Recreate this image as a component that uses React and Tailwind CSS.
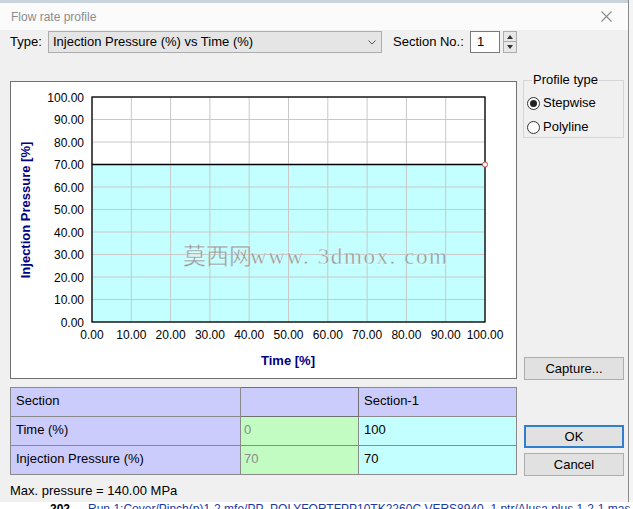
import React from 'react';

const font = { fontFamily: '"Liberation Sans", Arial, sans-serif' };

// plot geometry in page coordinates
const PX0 = 92;
const PX1 = 485;
const PY0 = 97;
const PY1 = 322;
const ticks = [0, 1, 2, 3, 4, 5, 6, 7, 8, 9, 10];

function Chart() {
  const xAt = (i) => PX0 + (i * (PX1 - PX0)) / 10;
  const yAt = (i) => PY1 - (i * (PY1 - PY0)) / 10;
  const yFill = yAt(7);
  return (
    <svg width="505" height="296" className="block">
      <g transform="translate(-11,-82)">
        <rect x={PX0} y={PY0} width={PX1 - PX0} height={PY1 - PY0} fill="#ffffff" />
        <rect x={PX0} y={yFill} width={PX1 - PX0} height={PY1 - yFill} fill="#c4ffff" />
        {ticks.map((i) => (
          <g key={i}>
            <line x1={xAt(i)} x2={xAt(i)} y1={PY0} y2={PY1} stroke="#c8c8c8" strokeWidth="1" />
            <line x1={PX0} x2={PX1} y1={yAt(i)} y2={yAt(i)} stroke="#c8c8c8" strokeWidth="1" />
            <text x="84" y={yAt(i) + 4.5} textAnchor="end" fontSize="12" fill="#000" style={font}>
              {(i * 10).toFixed(2)}
            </text>
            <text x={xAt(i)} y="338.5" textAnchor="middle" fontSize="12" fill="#000" style={font}>
              {(i * 10).toFixed(2)}
            </text>
          </g>
        ))}
        <line x1={PX0} x2={PX1} y1={yFill} y2={yFill} stroke="#000" strokeWidth="1.3" />
        <rect x={PX0} y={PY0} width={PX1 - PX0} height={PY1 - PY0} fill="none" stroke="#000" strokeWidth="1.3" />
        <circle cx={PX1} cy={yFill} r="2.6" fill="#ffffff" stroke="#d04040" strokeWidth="1" />
        <text
          x="0"
          y="0"
          transform="translate(30,210) rotate(-90)"
          textAnchor="middle"
          fontSize="13"
          fontWeight="bold"
          fill="#000080"
          style={font}
        >
          Injection Pressure [%]
        </text>
        <text x="288" y="365" textAnchor="middle" fontSize="13" fontWeight="bold" fill="#000080" style={font}>
          Time [%]
        </text>
        <text
          x="183"
          y="264"
          fontSize="23"
          fill="#8c9c9c"
          stroke="#ffffff"
          strokeWidth="0.3"
          style={{ fontFamily: '"Noto Sans CJK SC", "Liberation Serif", serif' }}
        >
          莫西网
        </text>
        <text
          x="250"
          y="264"
          fontSize="23"
          fill="#8c9c9c"
          stroke="#ffffff"
          strokeWidth="0.3"
          textLength="197"
          style={{ fontFamily: '"Liberation Serif", serif' }}
        >
          www. 3dmox. com
        </text>
      </g>
    </svg>
  );
}

function Radio({ checked, label }) {
  return (
    <label className="flex h-[24px] items-center gap-[3px]">
      <span className="flex h-[13px] w-[13px] items-center justify-center rounded-full border border-[#333] bg-white">
        {checked && <span className="h-[7px] w-[7px] rounded-full bg-[#222]" />}
      </span>
      <span>{label}</span>
    </label>
  );
}

function Button({ children, primary }) {
  return (
    <button
      className={
        'flex h-[23px] w-[100px] items-center justify-center bg-[#e1e1e1] text-[13px] text-black ' +
        (primary ? 'border-2 border-[#2f7fd0]' : 'border border-[#adadad]')
      }
    >
      {children}
    </button>
  );
}

export default function App() {
  const lav = 'bg-[#ccccfc]';
  return (
    <div className="relative h-[509px] w-[633px] overflow-hidden bg-[#f4f4f4] text-[13px] text-black" style={font}>
      <div className="flex h-[502px] w-[629px] flex-col border-r border-[#8a8a8a] bg-[#f0f0f0]">
        {/* title bar */}
        <div className="flex h-[30px] items-center justify-between border-t-[3px] border-[#c9d3dc] bg-[#fbfbfb] pl-[11px] pr-[16px]">
          <span className="text-[12px] text-[#8c8c8c]">Flow rate profile</span>
          <svg width="11" height="11" viewBox="0 0 11 11">
            <path d="M0.5 0.5 L10.5 10.5 M10.5 0.5 L0.5 10.5" stroke="#8a8a8a" strokeWidth="1.1" />
          </svg>
        </div>

        <div className="flex flex-col px-[10px]">
          {/* type row */}
          <div className="mt-[1px] flex h-[22px] items-center">
            <span className="w-[38px]">Type:</span>
            <div className="flex h-[22px] w-[334px] items-center justify-between border border-[#adadad] bg-[#e5e5e5] pl-[4px] pr-[5px]">
              <span>Injection Pressure (%) vs Time (%)</span>
              <svg width="8" height="5" viewBox="0 0 8 5">
                <path d="M0.5 0.5 L4 4 L7.5 0.5" fill="none" stroke="#555" strokeWidth="1" />
              </svg>
            </div>
            <span className="ml-[11px] w-[77px]">Section No.:</span>
            <div className="flex h-[22px] w-[30px] items-center border border-[#7a7a7a] bg-white pl-[6px]">1</div>
            <div className="ml-[3px] flex h-[22px] w-[14px] flex-col">
              <div className="flex h-[11px] items-center justify-center border border-[#adadad] bg-[#e8e8e8]">
                <svg width="6" height="4" viewBox="0 0 6 4"><path d="M0 4 L3 0 L6 4 Z" fill="#333" /></svg>
              </div>
              <div className="flex h-[11px] items-center justify-center border border-t-0 border-[#adadad] bg-[#e8e8e8]">
                <svg width="6" height="4" viewBox="0 0 6 4"><path d="M0 0 L3 4 L6 0 Z" fill="#333" /></svg>
              </div>
            </div>
          </div>

          {/* main area */}
          <div className="mt-[27px] flex gap-[6px]">
            <div className="flex w-[507px] flex-col">
              <div className="mt-[1px] h-[298px] border border-[#707070] bg-white">
                <Chart />
              </div>

              <table className="mt-[8px] w-[507px] border-collapse border border-[#505050] text-[13px]">
                <tbody>
                  <tr className="h-[29px]">
                    <td className={`w-[230px] border border-[#8a8a8a] pb-[2px] pl-[5px] ${lav}`}>Section</td>
                    <td className={`w-[118px] border border-[#707070] ${lav}`}></td>
                    <td className={`border border-[#8a8a8a] pb-[2px] pl-[5px] ${lav}`}>Section-1</td>
                  </tr>
                  <tr className="h-[29px]">
                    <td className={`border border-[#8a8a8a] pb-[2px] pl-[5px] ${lav}`}>Time (%)</td>
                    <td className="border border-[#8a8a8a] bg-[#c2fcc2] pb-[2px] pl-[3px] text-[#8a8a8a]">0</td>
                    <td className="border border-[#8a8a8a] bg-[#c4ffff] pb-[2px] pl-[5px]">100</td>
                  </tr>
                  <tr className="h-[29px]">
                    <td className={`border border-[#8a8a8a] pb-[2px] pl-[5px] ${lav}`}>Injection Pressure (%)</td>
                    <td className="border border-[#8a8a8a] bg-[#c2fcc2] pb-[2px] pl-[3px] text-[#8a8a8a]">70</td>
                    <td className="border border-[#8a8a8a] bg-[#c4ffff] pb-[2px] pl-[5px]">70</td>
                  </tr>
                </tbody>
              </table>

              <div className="mt-[8px] h-[16px] leading-[16px]">Max. pressure = 140.00 MPa</div>
            </div>

            {/* right column */}
            <div className="flex w-[102px] flex-col">
              <fieldset className="-mt-[7px] h-[65px] border border-[#d5d5d5] pb-[2px] pl-[3px] pr-0 pt-0">
                <legend className="ml-[5px] px-[1px] leading-[14px]">Profile type</legend>
                <div className="mt-[4px] flex flex-col">
                  <Radio checked label="Stepwise" />
                  <Radio label="Polyline" />
                </div>
              </fieldset>
              <div className="ml-[1px] mt-[219px]">
                <Button>Capture...</Button>
              </div>
              <div className="ml-[1px] mt-[45px]">
                <Button primary>OK</Button>
              </div>
              <div className="ml-[1px] mt-[5px]">
                <Button>Cancel</Button>
              </div>
            </div>
          </div>
        </div>
      </div>

      {/* background application strip */}
      <div className="flex h-[7px] items-start overflow-hidden bg-white text-[12px] leading-[14px]">
        <span className="ml-[50px] font-bold">202</span>
        <span className="ml-[18px] text-[#1a3aa0]">Run 1:Cover/Pinch(p)1-2.mfe/PP_POLYFORTFPP10TK2260C.VERS8940_1.ptr/Alusa.plus 1-2-1.mas</span>
      </div>
    </div>
  );
}
